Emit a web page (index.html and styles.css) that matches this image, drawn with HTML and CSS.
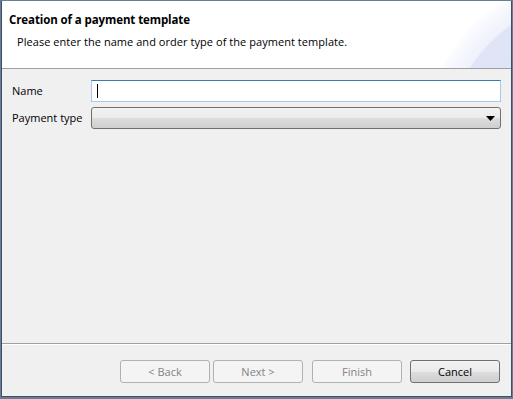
FILE: index.html
```html
<!DOCTYPE html>
<html lang="en">
<head>
    <meta charset="UTF-8">
    <title>Creation of a payment template</title>
    <link rel="stylesheet" href="styles.css">
</head>
<body>
    <div class="dialog">
        <div class="header">
            <div class="banner"></div>
            <h1>Creation of a payment template</h1>
            <p>Please enter the name and order type of the payment template.</p>
        </div>

        <div class="content">
            <div class="row">
                <label for="name">Name</label>
                <div class="field" id="name"><span class="caret"></span></div>
            </div>
            <div class="row">
                <label for="type">Payment type</label>
                <div class="combo" id="type">
                    <svg width="9" height="5" viewBox="0 0 9 5"><path d="M0 0h9L4.5 5z" fill="#000"/></svg>
                </div>
            </div>
        </div>

        <div class="footer">
            <button disabled>&lt; Back</button>
            <button disabled>Next &gt;</button>
            <button disabled class="finish">Finish</button>
            <button class="cancel">Cancel</button>
        </div>
    </div>
</body>
</html>
```

FILE: styles.css
```css
html, body {
    margin: 0;
    padding: 0;
}

body {
    font-family: "Open Sans", "Noto Sans", sans-serif;
    font-size: 11px;
    color: #000;
    background: #6b7d95;
}

.dialog {
    width: 509px;
    height: 395px;
    margin: 1px 0 0 1px;
    border-left: 1px solid #3c4f66;
    border-right: 1px solid #3c4f66;
    border-bottom: 1px solid #3c4f66;
    background: #f0f0f0;
    display: flex;
    flex-direction: column;
}

.header {
    position: relative;
    height: 67px;
    background: #fff;
    border-bottom: 1px solid #a0a0a0;
    overflow: hidden;
}

.header h1 {
    position: relative;
    margin: 0;
    padding: 11px 0 0 7px;
    font-size: 11.5px;
    font-weight: bold;
    letter-spacing: -0.1px;
    line-height: 16px;
}

.header p {
    position: relative;
    margin: 0;
    padding: 6px 0 0 15px;
    line-height: 16px;
    letter-spacing: 0.05px;
}

.banner {
    position: absolute;
    left: 0;
    top: 0;
    right: 0;
    bottom: 0;
    background:
        radial-gradient(circle 155px at 598px 150px, #dbe2f6 0, #dfe5f7 99%, rgba(255,255,255,0) 100%),
        radial-gradient(circle 180px at 598px 150px, #e8ecf9 0, #eef1fb 85%, #f9fafe 97%, rgba(255,255,255,0) 100%);
}

.content {
    flex: 1;
    padding: 11px 10px 0 10px;
    display: flex;
    flex-direction: column;
    gap: 5px;
    border-bottom: 1px solid #a0a0a0;
}

.row {
    display: flex;
    align-items: center;
}

.row label {
    width: 79px;
    line-height: 16px;
}

.field {
    flex: 1;
    height: 22px;
    box-sizing: border-box;
    border: 1px solid #a9cbe9;
    border-top-color: #3d7bad;
    background: #fff;
    display: flex;
    align-items: center;
    padding-left: 5px;
}

.caret {
    width: 1px;
    height: 14px;
    background: #000;
}

.combo {
    flex: 1;
    height: 22px;
    box-sizing: border-box;
    border: 1px solid #707070;
    border-radius: 3px;
    background: linear-gradient(#f2f2f2 0, #ebebeb 50%, #dddddd 51%, #cfcfcf 100%);
    display: flex;
    align-items: center;
    justify-content: flex-end;
    padding-right: 5px;
}

.footer {
    height: 52px;
    display: flex;
    justify-content: flex-end;
    align-items: flex-start;
    padding: 15px 11px 0 0;
    box-sizing: border-box;
    border-top: 1px solid #fff;
}

.footer button {
    width: 90px;
    height: 23px;
    margin-left: 3px;
    font: inherit;
    border: 1px solid #adb2b5;
    border-radius: 3px;
    background: #f4f4f4;
    color: #838383;
    padding: 0;
}

.footer .finish {
    margin-left: 9px;
}

.footer .cancel {
    margin-left: 8px;
    color: #000;
    border-color: #707070;
    background: linear-gradient(#f2f2f2 0, #ebebeb 50%, #dddddd 51%, #cfcfcf 100%);
}
```
